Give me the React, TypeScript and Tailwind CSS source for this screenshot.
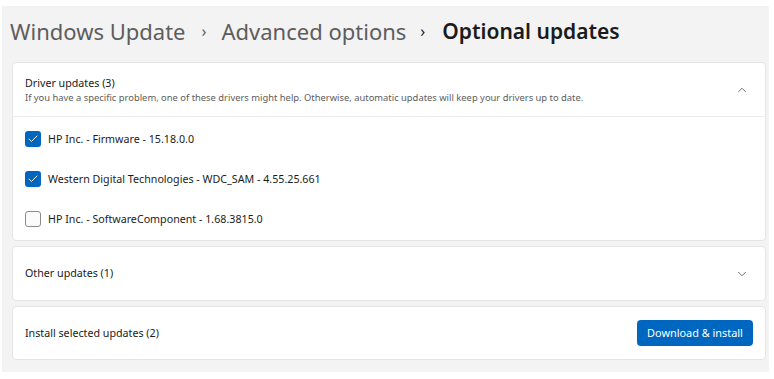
import { Check, ChevronDown, ChevronUp } from "lucide-react";

const drivers = [
  { id: 1, label: "HP Inc. - Firmware - 15.18.0.0", checked: true },
  { id: 2, label: "Western Digital Technologies - WDC_SAM - 4.55.25.661", checked: true },
  { id: 3, label: "HP Inc. - SoftwareComponent - 1.68.3815.0", checked: false },
];

function Checkbox({ checked }: { checked: boolean }) {
  return checked ? (
    <span className="w-4 h-4 rounded-[3px] bg-[#0067c0] flex items-center justify-center shrink-0">
      <Check className="w-3 h-3 text-white" strokeWidth={2} />
    </span>
  ) : (
    <span className="w-4 h-4 rounded-[3px] border border-[#8a8a8a] bg-[#fbfbfb] shrink-0" />
  );
}

export default function App() {
  return (
    <div
      className="w-[774px] h-[379px] bg-white pt-[6px] pl-[2px] pr-[5px] pb-[7px]"
      style={{ fontFamily: '"Noto Sans", "Open Sans", sans-serif' }}
    >
      <div className="h-full bg-[#f3f3f3] pl-[10px] pr-[3px] flex flex-col">
        {/* breadcrumb */}
        <div className="h-[56px] pb-[6px] flex items-center -ml-[2px] text-[22px] leading-none">
          <span className="text-[#5d5d5d]">Windows Update</span>
          <span className="text-[#5d5d5d] text-[16px] ml-[16px] mr-[15px]">›</span>
          <span className="text-[#5d5d5d]">Advanced options</span>
          <span className="text-[#1b1b1b] text-[16px] ml-[14px] mr-[17px]">›</span>
          <span className="text-[#1b1b1b] font-semibold text-[21px]">Optional updates</span>
        </div>

        {/* driver updates */}
        <div className="bg-white border border-[#e5e5e5] rounded-[4px]">
          <div className="h-[54px] flex items-center justify-between pl-[12px] pr-[16px] border-b border-[#ebebeb]">
            <div>
              <p className="text-[10.7px] text-[#1b1b1b] leading-[16px]">Driver updates (3)</p>
              <p className="text-[9.4px] text-[#5d5d5d] leading-[14px]">
                If you have a specific problem, one of these drivers might help. Otherwise, automatic updates will keep your drivers up to date.
              </p>
            </div>
            <ChevronUp className="w-[14px] h-[14px] text-[#5d5d5d]" strokeWidth={1.5} />
          </div>
          <div className="pt-[2px] pb-[1px]">
            {drivers.map((d) => (
              <div key={d.id} className="h-[40px] flex items-center gap-[7px] pl-[12px]">
                <Checkbox checked={d.checked} />
                <span className="text-[10.7px] text-[#1b1b1b]">{d.label}</span>
              </div>
            ))}
          </div>
        </div>

        {/* other updates */}
        <div className="mt-[5px] h-[55px] bg-white border border-[#e5e5e5] rounded-[4px] flex items-center justify-between pl-[12px] pr-[16px]">
          <span className="text-[10.7px] text-[#1b1b1b]">Other updates (1)</span>
          <ChevronDown className="w-[14px] h-[14px] text-[#5d5d5d]" strokeWidth={1.5} />
        </div>

        {/* install */}
        <div className="mt-[5px] h-[54px] bg-white border border-[#e5e5e5] rounded-[4px] flex items-center justify-between pl-[12px] pr-[12px]">
          <span className="text-[10.7px] text-[#1b1b1b]">Install selected updates (2)</span>
          <button className="w-[116px] h-[26px] rounded-[4px] bg-[#0067c0] text-white text-[10.9px]">
            Download &amp; install
          </button>
        </div>
      </div>
    </div>
  );
}
